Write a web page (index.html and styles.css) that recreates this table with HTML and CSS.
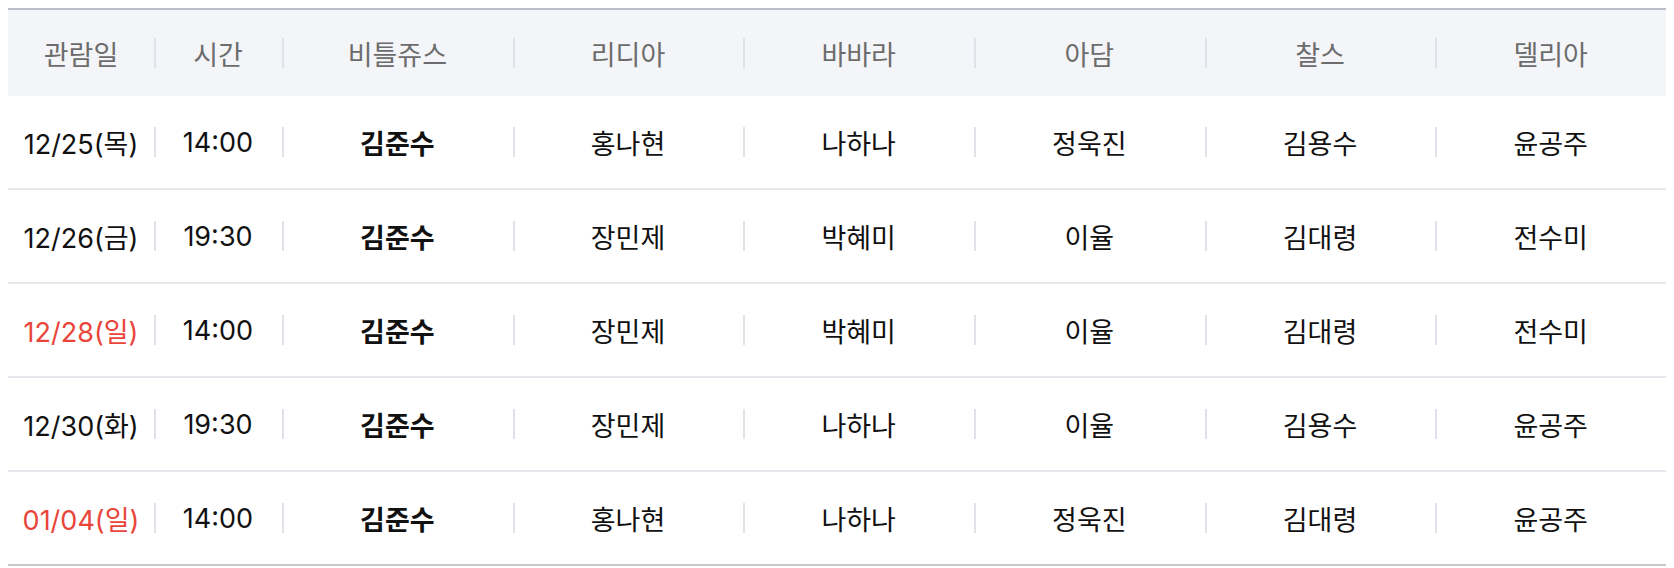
FILE: index.html
```html
<!DOCTYPE html>
<html lang="ko">
<head>
<meta charset="utf-8">
<title>캐스팅 일정</title>
<link rel="stylesheet" href="styles.css">
</head>
<body>
<div class="schedule">
  <div class="row head">
    <div class="cell">관람일</div>
    <div class="cell sep">시간</div>
    <div class="cell sep">비틀쥬스</div>
    <div class="cell sep">리디아</div>
    <div class="cell sep">바바라</div>
    <div class="cell sep">아담</div>
    <div class="cell sep">찰스</div>
    <div class="cell sep">델리아</div>
  </div>
  <div class="row">
    <div class="cell">12/25(목)</div>
    <div class="cell sep">14:00</div>
    <div class="cell sep bold">김준수</div>
    <div class="cell sep">홍나현</div>
    <div class="cell sep">나하나</div>
    <div class="cell sep">정욱진</div>
    <div class="cell sep">김용수</div>
    <div class="cell sep">윤공주</div>
  </div>
  <div class="row">
    <div class="cell">12/26(금)</div>
    <div class="cell sep">19:30</div>
    <div class="cell sep bold">김준수</div>
    <div class="cell sep">장민제</div>
    <div class="cell sep">박혜미</div>
    <div class="cell sep">이율</div>
    <div class="cell sep">김대령</div>
    <div class="cell sep">전수미</div>
  </div>
  <div class="row">
    <div class="cell holiday">12/28(일)</div>
    <div class="cell sep">14:00</div>
    <div class="cell sep bold">김준수</div>
    <div class="cell sep">장민제</div>
    <div class="cell sep">박혜미</div>
    <div class="cell sep">이율</div>
    <div class="cell sep">김대령</div>
    <div class="cell sep">전수미</div>
  </div>
  <div class="row">
    <div class="cell">12/30(화)</div>
    <div class="cell sep">19:30</div>
    <div class="cell sep bold">김준수</div>
    <div class="cell sep">장민제</div>
    <div class="cell sep">나하나</div>
    <div class="cell sep">이율</div>
    <div class="cell sep">김용수</div>
    <div class="cell sep">윤공주</div>
  </div>
  <div class="row last">
    <div class="cell holiday">01/04(일)</div>
    <div class="cell sep">14:00</div>
    <div class="cell sep bold">김준수</div>
    <div class="cell sep">홍나현</div>
    <div class="cell sep">나하나</div>
    <div class="cell sep">정욱진</div>
    <div class="cell sep">김대령</div>
    <div class="cell sep">윤공주</div>
  </div>
</div>
</body>
</html>
```
FILE: styles.css
```css
html, body {
  margin: 0;
  padding: 0;
  background: #ffffff;
}
body {
  padding: 8px;
  font-family: Inter, "Noto Sans CJK KR", "Noto Sans", sans-serif;
  color: #111111;
}
.schedule {
  border-top: 2px solid #b9bdc8;
}
.row {
  display: grid;
  grid-template-columns: 146px 128px repeat(6, 1fr);
  height: 94px;
  border-bottom: 2px solid #e4e7ec;
  box-sizing: border-box;
  font-size: 27px;
}
.row.head {
  height: 86px;
  background: #f4f5f8;
  border-bottom: none;
  color: #6c6c6c;
}
.row.last {
  border-bottom-color: #c8c8c8;
}
.cell {
  display: flex;
  align-items: center;
  justify-content: center;
  white-space: nowrap;
}
.cell.sep::before {
  content: "";
  flex: none;
  width: 2px;
  height: 30px;
  background: #dfe2e8;
  margin-right: auto;
}
.cell.sep::after {
  content: "";
  flex: none;
  width: 2px;
  margin-left: auto;
}
.bold {
  font-weight: 700;
}
.holiday {
  color: #e9453b;
}
```
